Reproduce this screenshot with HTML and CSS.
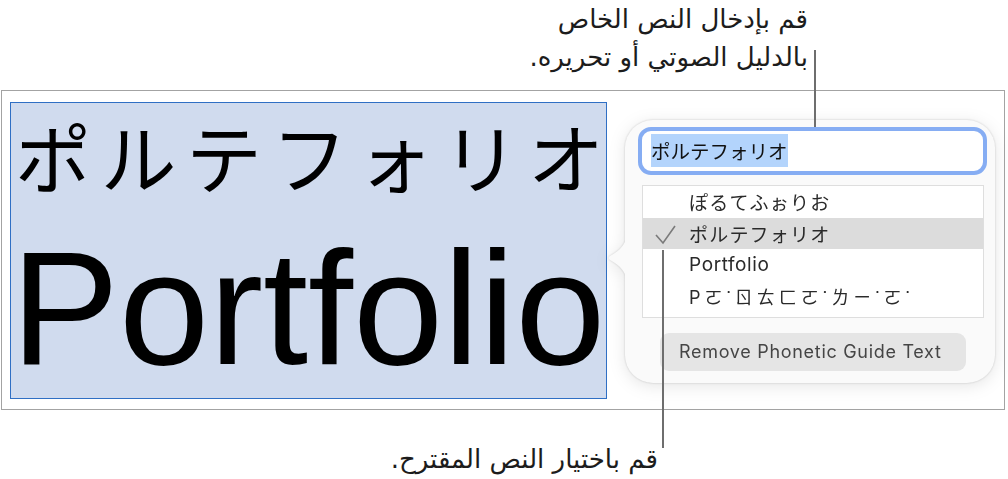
FILE: index.html
```html
<!DOCTYPE html>
<html lang="ar">
<head>
<meta charset="utf-8">
<title>Phonetic Guide</title>
<link rel="stylesheet" href="styles.css">
</head>
<body>
<div class="page">
  <div class="cap-top" dir="rtl">
    <p>قم بإدخال النص الخاص<br>بالدليل الصوتي أو تحريره.</p>
  </div>
  <div class="frame">
    <div class="selection">
      <div class="kana" lang="ja">ポルテフォリオ</div>
      <div class="latin" lang="en">Portfolio</div>
    </div>
  </div>
  <div class="cap-bottom" dir="rtl">
    <p>قم باختيار النص المقترح.</p>
  </div>

  <div class="popover" lang="ja">
    <svg class="arrow" width="20" height="44" viewBox="0 0 20 44">
      <path d="M20 0 C18 8 14 14 3 20 Q0 22 3 24 C14 30 18 36 20 44 Z" fill="#fafafa"/>
    </svg>
    <div class="field"><span class="field-sel">ポルテフォリオ</span></div>
    <div class="list">
      <div class="row"><span class="check"></span><span class="label">ぽるてふぉりお</span></div>
      <div class="row row-on"><span class="check"><svg width="22" height="20" viewBox="0 0 22 20"><polyline points="1,10 8,18 20,1" fill="none" stroke="#7a7a7a" stroke-width="1.6"/></svg></span><span class="label">ポルテフォリオ</span></div>
      <div class="row"><span class="check"></span><span class="label label-latin" lang="en">Portfolio</span></div>
      <div class="row"><span class="check"></span><span class="label label-bpmf" lang="zh-TW">Pㄛ˙ㄖㄊㄈㄛ˙ㄌㄧ˙ㄛ˙</span></div>
    </div>
    <div class="btn-row"><div class="btn" lang="en">Remove Phonetic Guide Text</div></div>
  </div>

  <div class="leader leader-top"></div>
  <div class="leader leader-bottom"></div>
</div>
</body>
</html>
```

FILE: styles.css
```css
html, body {
  margin: 0;
  padding: 0;
  background: #ffffff;
}
.page {
  position: relative;
  width: 1008px;
  height: 479px;
  overflow: hidden;
  background: #ffffff;
  color: #1a1a1a;
}
.cap-top {
  box-sizing: border-box;
  height: 90px;
  padding-right: 200px;
  padding-top: 0;
  font-family: "DejaVu Sans", "Noto Sans", sans-serif;
  font-size: 26px;
  line-height: 38px;
  color: #1c1c1c;
}
.cap-top p, .cap-bottom p {
  margin: 0;
}
.frame {
  box-sizing: border-box;
  margin-left: 1px;
  width: 1004px;
  height: 320px;
  border: 1px solid #a3a3a3;
  padding: 11px 0 0 8px;
}
.selection {
  box-sizing: border-box;
  width: 597px;
  height: 297px;
  border: 1px solid #2f6fc4;
  background: #d0dbee;
  display: flex;
  flex-direction: column;
}
.kana {
  font-family: "Noto Sans CJK JP", sans-serif;
  font-size: 76px;
  line-height: 76px;
  letter-spacing: 9.5px;
  margin-top: 14px;
  padding-left: 4px;
  color: #000;
  white-space: nowrap;
}
.latin {
  font-family: "Liberation Sans", Arial, sans-serif;
  font-size: 162px;
  line-height: 162px;
  margin-top: 34px;
  padding-left: 0;
  color: #000;
  white-space: nowrap;
}
.cap-bottom {
  box-sizing: border-box;
  padding-right: 350px;
  padding-top: 30px;
  font-family: "DejaVu Sans", "Noto Sans", sans-serif;
  font-size: 26px;
  line-height: 38px;
  color: #1c1c1c;
}

.popover {
  position: absolute;
  left: 625px;
  top: 120px;
  width: 370px;
  height: 263px;
  box-sizing: border-box;
  background: #fafafa;
  border-radius: 28px;
  filter: drop-shadow(0 0 1px rgba(0,0,0,0.18)) drop-shadow(0 3px 8px rgba(0,0,0,0.10));
  display: flex;
  flex-direction: column;
  padding: 7px 0 0 13px;
}
.arrow {
  position: absolute;
  left: -18px;
  top: 116px;
}
.field {
  box-sizing: border-box;
  width: 349px;
  height: 48px;
  border: 4px solid #86adf3;
  border-radius: 13px;
  background: #ffffff;
  padding: 6px 0 0 9px;
  font-family: "Noto Sans CJK JP", sans-serif;
  font-size: 19.5px;
  line-height: 28px;
  color: #111;
}
.field-sel {
  background: #b3d4fc;
  padding: 2px 0;
}
.list {
  box-sizing: border-box;
  margin: 10px 0 0 4px;
  width: 342px;
  height: 133px;
  border: 1px solid #dedede;
  background: #ffffff;
  display: flex;
  flex-direction: column;
}
.row {
  height: 31.5px;
  display: flex;
  align-items: center;
  font-family: "Noto Sans CJK JP", sans-serif;
  font-size: 19px;
  color: #2a2a2a;
}
.row-on {
  background: #dcdcdc;
}
.check {
  width: 46px;
  height: 31px;
  display: flex;
  align-items: center;
  padding-left: 12px;
  box-sizing: border-box;
}
.check svg {
  display: block;
  margin-top: 4px;
}
.label {
  white-space: nowrap;
  letter-spacing: 1.2px;
}
.label-latin {
  font-family: "Inter", "Liberation Sans", sans-serif;
  font-size: 19px;
  letter-spacing: 0.6px;
}
.label-bpmf {
  font-family: "Inter", "Noto Sans CJK TC", sans-serif;
  font-size: 18px;
  letter-spacing: 4px;
}
.btn-row {
  margin: 15px 0 0 22px;
}
.btn {
  box-sizing: border-box;
  width: 306px;
  height: 38px;
  border-radius: 9px;
  background: #e5e5e5;
  font-family: "Inter", "Liberation Sans", sans-serif;
  font-size: 18px;
  letter-spacing: 0.7px;
  line-height: 38px;
  padding-left: 19px;
  color: #454545;
  white-space: nowrap;
}

.leader {
  position: absolute;
  width: 2px;
  background: #6e6e6e;
}
.leader-top {
  left: 814px;
  top: 50px;
  height: 77px;
}
.leader-bottom {
  left: 662px;
  top: 250px;
  height: 198px;
}
```
